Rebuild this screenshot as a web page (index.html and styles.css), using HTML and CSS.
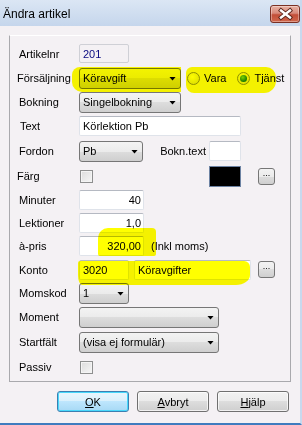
FILE: index.html
```html
<!DOCTYPE html>
<html lang="sv">
<head>
    <meta charset="UTF-8">
    <title>Ändra artikel</title>
    <link rel="stylesheet" href="styles.css">
</head>
<body>
    <div class="window">
        <div class="titlebar">
            <span class="title">Ändra artikel</span>
            <span class="close">
                <svg width="30" height="18" viewBox="0 0 30 18">
                    <path d="M11 5.5 L20 12.5 M20 5.5 L11 12.5" stroke="#5a2218" stroke-width="4.2" stroke-linecap="square"/>
                    <path d="M11 5.5 L20 12.5 M20 5.5 L11 12.5" stroke="#fff" stroke-width="2.4" stroke-linecap="square"/>
                </svg>
            </span>
        </div>

        <div class="content">
            <div class="panel">
                <div class="row">
                    <span class="lbl">Artikelnr</span>
                    <div class="input disabled w50">201</div>
                </div>
                <div class="row">
                    <span class="lbl shift">Försäljning</span>
                    <div class="combo w102">Köravgift</div>
                    <div class="radios">
                        <span class="radio"></span><span class="radio-text">Vara</span>
                        <span class="radio checked"></span><span class="radio-text">Tjänst</span>
                    </div>
                </div>
                <div class="row">
                    <span class="lbl">Bokning</span>
                    <div class="combo w102">Singelbokning</div>
                </div>
                <div class="row">
                    <span class="lbl text-lbl">Text</span>
                    <div class="input w162">Körlektion Pb</div>
                </div>
                <div class="row">
                    <span class="lbl">Fordon</span>
                    <div class="group w162">
                        <div class="combo w64">Pb</div>
                        <span class="side-lbl">Bokn.text</span>
                        <div class="input w32"></div>
                    </div>
                </div>
                <div class="row">
                    <span class="lbl shift">Färg</span>
                    <div class="group w196">
                        <span class="check"></span>
                        <span class="swatch"></span>
                        <span class="dots">...</span>
                    </div>
                </div>
                <div class="row">
                    <span class="lbl">Minuter</span>
                    <div class="input num w65">40</div>
                </div>
                <div class="row">
                    <span class="lbl">Lektioner</span>
                    <div class="input num w65">1,0</div>
                </div>
                <div class="row">
                    <span class="lbl">à-pris</span>
                    <div class="input num w65">320,00</div>
                    <span class="note">(Inkl moms)</span>
                </div>
                <div class="row">
                    <span class="lbl">Konto</span>
                    <div class="group">
                        <div class="input w50">3020</div>
                        <div class="input w117">Köravgifter</div>
                        <span class="dots">...</span>
                    </div>
                </div>
                <div class="row">
                    <span class="lbl">Momskod</span>
                    <div class="combo w50">1</div>
                </div>
                <div class="row">
                    <span class="lbl">Moment</span>
                    <div class="combo w140"></div>
                </div>
                <div class="row">
                    <span class="lbl">Startfält</span>
                    <div class="combo w140">(visa ej formulär)</div>
                </div>
                <div class="row">
                    <span class="lbl">Passiv</span>
                    <span class="check"></span>
                </div>
            </div>

            <div class="buttons">
                <span class="btn default"><u>O</u>K</span>
                <span class="btn"><u>A</u>vbryt</span>
                <span class="btn"><u>H</u>jälp</span>
            </div>
        </div>

        <!-- gul överstrykning -->
        <div class="mark mark-sale"></div>
        <div class="mark mark-radio"></div>
        <div class="mark mark-price"></div>
        <div class="mark mark-konto"></div>
    </div>
</body>
</html>
```

FILE: styles.css
```css
* {
    box-sizing: border-box;
}
body {
    margin: 0;
    font-family: "Liberation Sans", Arial, sans-serif;
    font-size: 11px;
    color: #000;
}
.window {
    position: relative;
    width: 302px;
    height: 425px;
    overflow: hidden;
    background-color: #f4f1f4;
    border-right: 2px solid #c8d9ee;
    border-bottom: 2px solid #3f7cbf;
}
.titlebar {
    height: 26px;
    display: flex;
    align-items: flex-start;
    padding-left: 3px;
    background: linear-gradient(#dbe6f4, #c5d6ec);
}
.title {
    font-size: 12px;
    margin-top: 7px;
}
.close {
    margin-left: auto;
    margin-top: 5px;
    width: 30px;
    height: 18px;
    border: 1px solid #7a3024;
    border-radius: 3px;
    background: linear-gradient(#e8b2a4, #d8897a 45%, #c24e38 55%, #d0674c);
    box-shadow: inset 0 0 0 1px rgba(255, 255, 255, 0.35);
    display: flex;
}
.close svg {
    margin: -1px;
}
.content {
    padding: 9px 9px 0 9px;
}
.panel {
    height: 347px;
    padding: 5px 0 0 9px;
    border: 1px solid #a9a9ad;
    border-top-color: #fff;
    display: grid;
    grid-template-rows: 25px 24px 24px 24px 26px 24px 23px 23px 24px 23px 24px 24px 26px 24px;
    align-content: start;
}
.row {
    display: flex;
    align-items: center;
}
.lbl {
    width: 60px;
    flex-shrink: 0;
}
.lbl.shift {
    margin-left: -2px;
    width: 62px;
}
.lbl.text-lbl {
    padding-left: 1px;
}
.input {
    height: 20px;
    display: flex;
    align-items: center;
    padding: 0 3px;
    background-color: #fff;
    border: 1px solid #dfe3ea;
    border-top-color: #b5b9c2;
    border-radius: 2px;
    white-space: nowrap;
}
.input.num {
    justify-content: flex-end;
    padding-right: 2px;
}
.input.disabled {
    height: 19px;
    background-color: transparent;
    border-color: #cfd0d6;
    color: #0a0a80;
}
.combo {
    position: relative;
    height: 21px;
    display: flex;
    align-items: center;
    padding-left: 3px;
    border: 1px solid #767676;
    border-radius: 3px;
    background: linear-gradient(#f3f3f3, #ebebeb 50%, #dddddd 50%, #cfcfcf);
    white-space: nowrap;
}
.combo::after {
    content: "";
    position: absolute;
    right: 4px;
    top: 8px;
    width: 7px;
    height: 4px;
    background-color: #000;
    clip-path: polygon(0 0, 100% 0, 50% 100%);
}
.w32 { width: 32px; }
.w50 { width: 50px; }
.w64 { width: 64px; }
.w65 { width: 65px; }
.w102 { width: 102px; }
.w117 { width: 117px; }
.w140 { width: 140px; }
.w162 { width: 162px; }
.w196 { width: 196px; }
.group {
    display: flex;
    align-items: center;
}
.side-lbl {
    flex: 1;
    text-align: right;
    padding-right: 3px;
}
.group .w117 {
    margin-left: 5px;
}
.group .w117 + .dots {
    margin-left: 7px;
}
.radios {
    display: flex;
    align-items: center;
    margin-left: 6px;
}
.radio {
    width: 13px;
    height: 13px;
    border-radius: 50%;
    border: 1px solid #8e8f8f;
    background: radial-gradient(circle at 40% 35%, #fdfdfd, #d8d8d8);
    display: flex;
    align-items: center;
    justify-content: center;
}
.radio.checked::after {
    content: "";
    width: 7px;
    height: 7px;
    border-radius: 50%;
    background: radial-gradient(circle at 40% 35%, #7ad16a, #1a7a1a 70%);
}
.radio-text {
    margin: 0 11px 0 4px;
}
.check {
    width: 13px;
    height: 13px;
    margin-left: 1px;
    border: 1px solid #8e8f8f;
    background: linear-gradient(135deg, #dcdcdc, #f6f6f6);
    box-shadow: inset 0 0 0 1px #f4f4f4;
}
.swatch {
    width: 32px;
    height: 21px;
    margin-left: auto;
    background-color: #000;
    border: 1px solid #6d83a3;
}
.dots {
    width: 17px;
    height: 17px;
    margin-left: 17px;
    border: 1px solid #767676;
    border-radius: 3px;
    background: linear-gradient(#f3f3f3, #ebebeb 50%, #dddddd 50%, #cfcfcf);
    display: flex;
    justify-content: center;
    align-items: flex-start;
    font-size: 9px;
    line-height: 9px;
    letter-spacing: 0;
}
.note {
    margin-left: 7px;
}
.buttons {
    display: flex;
    justify-content: flex-end;
    gap: 8px;
    margin-top: 9px;
    padding-right: 2px;
}
.btn {
    width: 72px;
    height: 21px;
    display: flex;
    align-items: center;
    justify-content: center;
    border: 1px solid #707070;
    border-radius: 3px;
    background: linear-gradient(#f2f2f2, #ebebeb 50%, #dddddd 50%, #cfcfcf);
    box-shadow: inset 0 0 0 1px rgba(255, 255, 255, 0.7);
}
.btn.default {
    border-color: #3c7fb1;
    background: linear-gradient(#eaf6fd, #d9f0fc 50%, #bee6fd 50%, #a7d9f5);
    box-shadow: inset 0 0 0 1px #48d8fb;
}
.btn u {
    text-decoration-thickness: 1px;
    text-underline-offset: 1px;
}
.mark {
    position: absolute;
    background-color: #ffff00;
    mix-blend-mode: multiply;
}
.mark-sale {
    left: 72px;
    top: 67px;
    width: 109px;
    height: 25px;
    border-radius: 8px 0 0 10px;
}
.mark-radio {
    left: 186px;
    top: 67px;
    width: 90px;
    height: 26px;
    border-radius: 6px 10px 12px 8px;
}
.mark-price {
    left: 98px;
    top: 228px;
    width: 58px;
    height: 28px;
    border-radius: 10px 4px 2px 2px;
}
.mark-konto {
    left: 78px;
    top: 261px;
    width: 172px;
    height: 24px;
    border-radius: 2px 6px 14px 4px / 2px 6px 10px 10px;
}
```
